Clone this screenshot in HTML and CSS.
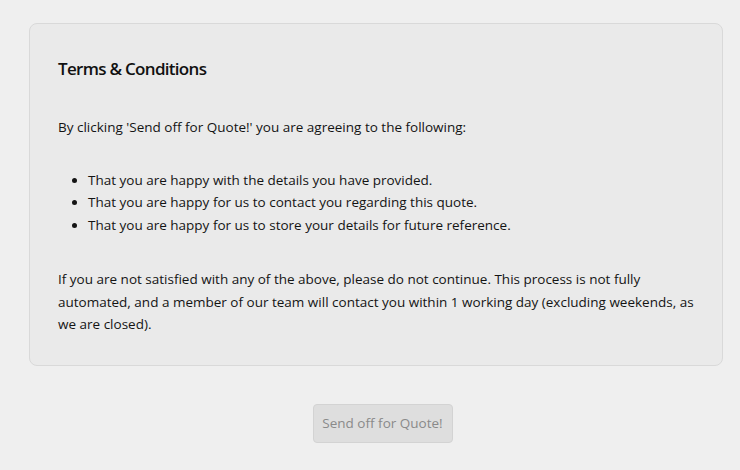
FILE: index.html
```html
<!DOCTYPE html>
<html>
	<head>
		<meta charset="utf-8" />
		<title>Terms &amp; Conditions</title>
		<link rel="stylesheet" href="styles.css">
	</head>
	<body>
		<div class="terms">
			<h3>Terms &amp; Conditions</h3>
			<p>By clicking 'Send off for Quote!' you are agreeing to the following:</p>
			<ul>
				<li>That you are happy with the details you have provided.</li>
				<li>That you are happy for us to contact you regarding this quote.</li>
				<li>That you are happy for us to store your details for future reference.</li>
			</ul>
			<p>If you are not satisfied with any of the above, please do not continue. This process is not fully automated, and a member of our team will contact you within 1 working day (excluding weekends, as we are closed).</p>
		</div>
		<div class="actions">
			<button class="send" disabled>Send off for Quote!</button>
		</div>
	</body>
</html>
```
FILE: styles.css
```css
*{
	margin: 0;
	padding: 0;
	box-sizing: border-box;
}
body{
	background: #efefef;
	font-family: "Open Sans", "Noto Sans", sans-serif;
	color: #141414;
	padding: 23px 17px 0 29px;
}
.terms{
	background: #eaeaea;
	border: 1px solid #d9d9d9;
	border-radius: 8px;
	padding: 33px 28px 29px 28px;
}
.terms h3{
	font-size: 17px;
	font-weight: 600;
	color: #111;
	margin-bottom: 36px;
	letter-spacing: -0.7px;
}
.terms p{
	font-size: 13.5px;
	line-height: 22.5px;
}
.terms ul{
	margin: 30px 0 32px 0;
	padding-left: 30px;
	font-size: 13.5px;
	line-height: 22.5px;
}
.actions{
	display: flex;
	justify-content: center;
	padding: 38px 0 0 13px;
}
.send{
	font-family: inherit;
	font-size: 13.5px;
	white-space: nowrap;
	color: #8a8a8a;
	background: #dedede;
	border: 1px solid #d3d3d3;
	border-radius: 4px;
	padding: 0 8px;
	width: 140px;
	height: 39px;
}
```
